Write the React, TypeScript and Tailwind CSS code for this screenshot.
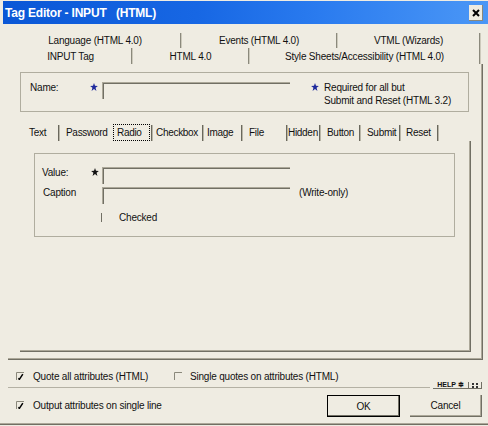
import React from "react";

function Sep() {
  return <div className="w-[2px] h-full border-l border-r border-l-[#8b897c] border-r-[#cdcabc]" />;
}

function TabSep() {
  return <div className="w-[2px] h-[16px] mt-[1px] border-l border-r border-l-[#6a685d] border-r-[#b9b6a8]" />;
}

function Star({ color }: { color: string }) {
  return (
    <svg width="8" height="8" viewBox="0 0 7 7.2">
      <polygon
        points="3.5,0 4.4,2.5 7,2.6 4.9,4.3 5.7,7.2 3.5,5.5 1.3,7.2 2.1,4.3 0,2.6 2.6,2.5"
        fill={color}
      />
    </svg>
  );
}

function Field({ w }: { w: string }) {
  return (
    <div
      className={`${w} h-[17px] border-t border-l border-[#aca899] shadow-[inset_1px_1px_0_#716f64]`}
    />
  );
}

function CheckOn() {
  return (
    <svg width="8" height="8" viewBox="0 0 8 8">
      <path d="M0.5 8V0.5H8" stroke="#8a887b" fill="none" />
      <path d="M2.3 6.4 L3.4 7.3 L6.8 2.2" stroke="#000" strokeWidth="1.5" fill="none" />
    </svg>
  );
}

function CheckOff() {
  return (
    <svg width="8" height="8" viewBox="0 0 8 8">
      <path d="M0.5 8V0.5H8" stroke="#8a887b" fill="none" />
    </svg>
  );
}

export default function App() {
  return (
    <div className="w-[488px] h-[426px] bg-[#efece2] text-[#111] text-[10px] tracking-[-0.2px] whitespace-nowrap overflow-hidden flex flex-col font-['Liberation_Sans',Arial,sans-serif]">
      {/* Title bar */}
      <div className="pt-[1px] pl-[3px]">
        <div className="h-[23px] flex items-center justify-between pl-[2px] pr-[5px] bg-[linear-gradient(to_right,#0a57d6,#1767e4_40%,#2a7bef_65%,#4b97f6)]">
          <span className="text-white font-bold text-[12px] whitespace-pre tracking-[-0.2px]">
            Tag Editor - INPUT   (HTML)
          </span>
          <div className="w-[14px] h-[16px] bg-[#eeebe0] flex items-center justify-center shadow-[inset_-1px_-1px_0_#8a887b]">
            <svg width="8" height="8" viewBox="0 0 8 8">
              <path d="M1 1L7 7M7 1L1 7" stroke="#000" strokeWidth="2" />
            </svg>
          </div>
        </div>
      </div>

      {/* Top tab rows */}
      <div className="mt-[9px] flex h-[15px] pl-[10px]">
        <div className="w-[170px] flex items-center justify-center">Language (HTML 4.0)</div>
        <Sep />
        <div className="w-[154px] flex items-center justify-center">Events (HTML 4.0)</div>
        <Sep />
        <div className="w-[141px] flex items-center justify-center">VTML (Wizards)</div>
        <Sep />
      </div>
      <div className="flex h-[16px] pl-[10px]">
        <div className="w-[121px] flex items-center justify-center">INPUT Tag</div>
        <Sep />
        <div className="w-[115px] flex items-center justify-center">HTML 4.0</div>
        <Sep />
        <div className="w-[229px] flex items-center justify-center">Style Sheets/Accessibility (HTML 4.0)</div>
        <Sep />
      </div>

      {/* Outer tab page */}
      <div className="ml-[8px] w-[475px] h-[296px] border-r border-b border-[#716f64] shadow-[inset_-1px_-1px_0_#aca899] pl-[12px] pt-[8px] flex flex-col">
        {/* Name group */}
        <div className="w-[449px] h-[40px] border border-[#b0ad9f] flex items-start pt-[9px] pl-[9px]">
          <div className="w-[60px] leading-[12px]">Name:</div>
          <div className="w-[12px] mt-[1px]">
            <Star color="#1f2a9c" />
          </div>
          <Field w="w-[188px]" />
          <div className="ml-[21px] w-[13px] mt-[1px]">
            <Star color="#1f2a9c" />
          </div>
          <div className="leading-[13px] -mt-[1px]">
            <div>Required for all but</div>
            <div>Submit and Reset (HTML 3.2)</div>
          </div>
        </div>

        {/* Inner tabs */}
        <div className="mt-[12px] h-[17px] flex items-stretch tracking-[-0.3px]">
          <div className="w-[38px] pl-[9px] flex items-center">Text</div>
          <TabSep />
          <div className="w-[50px] pl-[6px] flex items-center">Password</div>
          <div className="w-[41px] pl-[3px] flex items-stretch">
            <div className="w-[37px] border border-dotted border-black pl-[3px] flex items-center">Radio</div>
          </div>
          <TabSep />
          <div className="w-[49px] pl-[3px] flex items-center">Checkbox</div>
          <TabSep />
          <div className="w-[37px] pl-[3px] flex items-center">Image</div>
          <TabSep />
          <div className="w-[43px] pl-[6px] flex items-center">File</div>
          <TabSep />
          <div className="w-[31px] flex items-center">Hidden</div>
          <TabSep />
          <div className="w-[38px] pl-[6px] flex items-center">Button</div>
          <TabSep />
          <div className="w-[38px] pl-[6px] flex items-center">Submit</div>
          <TabSep />
          <div className="w-[36px] pl-[5px] flex items-center">Reset</div>
          <TabSep />
        </div>

        {/* Inner tab page */}
        <div className="w-[451px] h-[211px] border-r border-b border-[#716f64] shadow-[inset_-1px_-1px_0_#aca899] pl-[14px] pt-[12px]">
          <div className="w-[421px] h-[84px] border border-[#b0ad9f] pt-[13px] pl-[7px] flex flex-col">
            <div className="flex items-start">
              <div className="w-[49px] leading-[11px]">Value:</div>
              <div className="w-[11px] mt-[1px]">
                <Star color="#111" />
              </div>
              <Field w="w-[188px]" />
            </div>
            <div className="flex items-start mt-[3px]">
              <div className="w-[60px] pl-[1px] leading-[11px]">Caption</div>
              <Field w="w-[188px]" />
              <div className="ml-[9px] leading-[11px]">(Write-only)</div>
            </div>
            <div className="flex items-center mt-[8px] h-[10px]">
              <div className="ml-[59px] w-[2px] h-[9px] border-l border-[#716f64]" />
              <div className="ml-[16px]">Checked</div>
            </div>
          </div>
        </div>
      </div>

      {/* Bottom options */}
      <div className="h-[22px] pt-[10px] pl-[16px] flex items-center">
        <div className="w-[158px] flex items-center">
          <CheckOn />
          <span className="ml-[9px]">Quote all attributes (HTML)</span>
        </div>
        <CheckOff />
        <span className="ml-[8px]">Single quotes on attributes (HTML)</span>
      </div>

      <div className="h-[7px] flex items-end pl-[8px]">
        <div className="w-[422px] h-px bg-[#b4b1a4] mb-[1px]" />
        <div className="flex items-end h-[7px] ml-[3px]">
          <div className="w-[35px] h-[7px] border-b border-[#716f64] flex items-end justify-center text-[7px] font-bold leading-[6px] tracking-[0px] whitespace-pre">
            HELP ≑
          </div>
          <div className="w-px h-[7px] bg-[#716f64]" />
          <div className="w-[13px] h-[7px] border-b border-r border-[#716f64] flex items-center justify-center">
            <svg width="7" height="5" viewBox="0 0 7 5">
              <rect x="0" y="0" width="2" height="2" fill="#333" />
              <rect x="4" y="0" width="2" height="2" fill="#333" />
              <rect x="0" y="3" width="2" height="2" fill="#333" />
              <rect x="4" y="3" width="2" height="2" fill="#333" />
            </svg>
          </div>
        </div>
      </div>

      <div className="h-[34px] flex">
        <div className="flex-1 pl-[16px] pt-[12px]">
          <div className="flex items-center h-[8px]">
            <CheckOn />
            <span className="ml-[9px]">Output attributes on single line</span>
          </div>
        </div>
        <div className="pt-[6px] pr-[6px] flex">
          <div className="w-[73px] h-[22px] border border-black shadow-[inset_-1px_-1px_0_#716f64] flex items-center justify-center">
            OK
          </div>
          <div className="ml-[10px] w-[72px] h-[22px] border-r border-b border-[#716f64] shadow-[inset_-1px_-1px_0_#aca899] flex items-center justify-center">
            Cancel
          </div>
        </div>
      </div>

      <div className="h-[2px] bg-[#716f64] border-t border-[#aca899]" />
    </div>
  );
}
